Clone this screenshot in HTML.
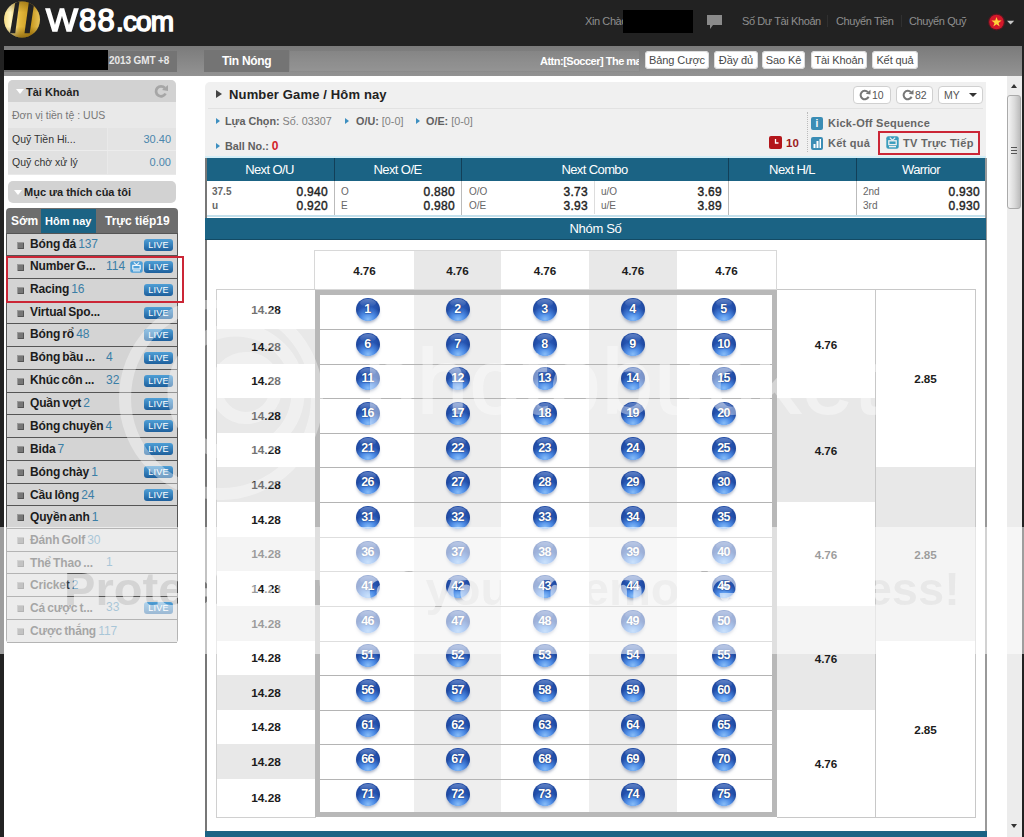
<!DOCTYPE html>
<html><head><meta charset="utf-8"><title>W88.com</title>
<style>
html,body{margin:0;padding:0}
body{width:1024px;height:837px;overflow:hidden;position:relative;background:#222;font-family:"Liberation Sans",sans-serif;font-size:12px;color:#222}
.a{position:absolute}
.t{position:absolute;white-space:nowrap;line-height:1}
#hdr{left:0;top:0;width:1024px;height:46px;background:#222}
#bar{left:4px;top:46px;width:1018px;height:30px;background:linear-gradient(#7b7b7b,#939393)}
#pg{left:4px;top:76px;width:1018px;height:761px;background:#fff}
.nav{color:#8f8f8f;font-size:11px;top:16px;letter-spacing:-0.4px}
.btn{position:absolute;top:51px;height:18px;background:#fff;border-radius:4px;font-size:11px;line-height:18px;text-align:center;color:#484848;box-shadow:0 0 0 1px #ddd inset;letter-spacing:-0.1px}
.lh{position:absolute;left:8px;width:168px;height:22px;background:#d2d2d2;border-radius:5px 5px 0 0;font-weight:bold;font-size:11px;color:#222}
.sp{position:absolute;left:7px;width:170px;height:22px;background:#d4d4d4;border-bottom:1px solid #555;box-sizing:border-box}
.sp b{position:absolute;left:23px;top:3px;font-size:12px;line-height:14px;color:#1c1c1c;white-space:nowrap;letter-spacing:-0.15px;word-spacing:-1px}
.sp b i{font-style:normal;font-weight:normal;color:#3a7ea6}
.sp .n{position:absolute;top:3px;font-size:12px;line-height:14px;color:#3a7ea6}
.sp .ic{position:absolute;left:10px;top:8px;width:7px;height:7px;background:#777;box-shadow:inset 1px 1px 0 #999,inset -1px -1px 0 #555}
.live{position:absolute;left:137px;top:5px;width:29px;height:12px;border-radius:3px;background:linear-gradient(#4f9fd6,#1d5f9c);color:#fff;font-size:9px;line-height:12px;text-align:center;letter-spacing:.2px}
.th{position:absolute;top:158px;height:23px;background:#1b6384;color:#fff;font-size:13px;line-height:23px;text-align:center;letter-spacing:-0.6px}
.od{font-size:12px;color:#222;-webkit-text-stroke:.4px #222;letter-spacing:.3px}
.lb{font-size:10px;color:#666}
.c{position:absolute;display:flex;align-items:center;justify-content:center;font-size:11.7px;font-weight:bold;color:#1c1c1c}
.g{background:#e8e8e8}
.l{font-size:11.8px}
.ball{position:absolute;width:24px;height:23px;border-radius:50%;background:radial-gradient(ellipse 62% 55% at 50% 92%,#86bcf8 0%,#4d8ce6 45%,rgba(60,120,220,0) 100%),radial-gradient(circle at 50% 45%,#2f62c0 0%,#2350ac 50%,#15357f 100%);color:#fff;font-size:12.5px;font-weight:bold;text-align:center;line-height:22px;letter-spacing:-0.7px;text-indent:-1px;box-shadow:0 3px 3px -1px rgba(90,110,150,.5);text-shadow:0 0 1px #123070,0 0 2px #123070}
.ball s{position:absolute;left:4px;top:1px;width:16px;height:8px;border-radius:50%;background:linear-gradient(rgba(255,255,255,.28),rgba(255,255,255,0))}
</style></head><body>

<div id="hdr" class="a"></div>
<svg class="a" style="left:3px;top:1px" width="38" height="38" viewBox="0 0 38 38">
<defs><linearGradient id="gd" x1="0" y1="0" x2="1" y2="0"><stop offset="0" stop-color="#f6dc84"/><stop offset=".18" stop-color="#fff6c4"/><stop offset=".45" stop-color="#e3b83c"/><stop offset=".75" stop-color="#c8981e"/><stop offset="1" stop-color="#e8c45a"/></linearGradient>
<linearGradient id="gv" x1="0" y1="0" x2="0" y2="1"><stop offset="0" stop-color="#6b4a00" stop-opacity=".45"/><stop offset=".3" stop-color="#6b4a00" stop-opacity="0"/><stop offset=".7" stop-color="#6b4a00" stop-opacity="0"/><stop offset="1" stop-color="#6b4a00" stop-opacity=".6"/></linearGradient>
<clipPath id="lc"><circle cx="19" cy="18.5" r="18"/></clipPath></defs>
<circle cx="19" cy="18.5" r="18" fill="url(#gd)"/><circle cx="19" cy="18.5" r="18" fill="url(#gv)"/>
<g clip-path="url(#lc)" fill="#222"><path d="M12.5 0 L16.5 0 L12.2 32.3 L7 32.3 Z"/><path d="M26 0 L31.5 0 L26.7 32.3 L21.5 32.3 Z"/></g>
</svg>
<div class="t" style="left:46px;top:5px;font-size:31px;color:#fff;-webkit-text-stroke:1.5px #fff;transform-origin:0 0;transform:scaleX(1.09)">W</div>
<div class="t" style="left:79px;top:5px;font-size:31px;color:#fff;-webkit-text-stroke:1.5px #fff;letter-spacing:1.2px">88</div>
<div class="t" style="left:116px;top:7.5px;font-size:28px;color:#fff;-webkit-text-stroke:1.5px #fff;letter-spacing:-0.9px">.com</div>
<div class="t nav" style="left:585px">Xin Chào</div>
<div class="a" style="left:623px;top:10px;width:70px;height:23px;background:#000"></div>
<svg class="a" style="left:706px;top:14px" width="17" height="16" viewBox="0 0 17 16"><path d="M1 1h15v10H7l-3 4v-4H1z" fill="#8a8a8a"/></svg>
<div class="t nav" style="left:742px">Số Dư Tài Khoản</div>
<div class="t nav" style="left:836px">Chuyển Tiền</div>
<div class="t nav" style="left:909px">Chuyển Quỹ</div>
<div class="a" style="left:827px;top:15px;width:1px;height:12px;background:#303030"></div>
<div class="a" style="left:901px;top:15px;width:1px;height:12px;background:#303030"></div>
<svg class="a" style="left:987px;top:13px" width="30" height="18" viewBox="0 0 30 18"><circle cx="9.5" cy="9" r="8.5" fill="#7a1020" opacity=".6"/><circle cx="9.5" cy="9" r="7.3" fill="#d4182a"/><path d="M9.5 4l1.3 3.6h3.8l-3.1 2.3 1.2 3.7-3.2-2.3-3.2 2.3 1.2-3.7-3.1-2.3h3.8z" fill="#ffd23a"/><path d="M20 7.7h7.2l-3.6 3.8z" fill="#c8c8c8"/></svg>
<div id="bar" class="a"></div>
<div class="a" style="left:4px;top:51px;width:173px;height:21px;background:#747474"></div>
<div class="a" style="left:4px;top:50px;width:104px;height:20px;background:#000"></div>
<div class="t" style="left:109px;top:56px;font-size:10px;color:#e8e8e8;font-weight:bold;letter-spacing:-0.1px">2013 GMT +8</div>
<div class="a" style="left:204px;top:50px;width:85px;height:22px;background:#747474"></div>
<div class="a" style="left:289px;top:50px;width:351px;height:22px;background:rgba(255,255,255,.05);border:1px solid rgba(0,0,0,.05);box-sizing:border-box"></div>
<div class="t" style="left:222px;top:55px;font-size:12px;color:#fff;font-weight:bold;letter-spacing:-0.3px">Tin Nóng</div>
<div class="t" style="left:540px;top:56px;font-size:11px;color:#fff;font-weight:bold;letter-spacing:-0.5px;width:99px;overflow:hidden">Attn:[Soccer] The maximum</div>
<div class="btn" style="left:645px;width:64px">Bảng Cược</div>
<div class="btn" style="left:714px;width:44px">Đầy đủ</div>
<div class="btn" style="left:762px;width:43px">Sao Kê</div>
<div class="btn" style="left:811px;width:56px">Tài Khoản</div>
<div class="btn" style="left:872px;width:46px">Kết quả</div>
<div id="pg" class="a"></div>
<div class="a" style="left:8px;top:80px;width:168px;height:95px;background:#e9e9e9;border-radius:5px 5px 0 0"></div>
<div class="lh" style="top:80px"></div>
<div class="a" style="left:16px;top:89px;border:4px solid transparent;border-top:5px solid #fff;width:0;height:0"></div>
<div class="t" style="left:26px;top:87px;font-size:11px;font-weight:bold;color:#222">Tài Khoản</div>
<svg class="a" style="left:154px;top:84px" width="15" height="15" viewBox="0 0 15 15"><path d="M11.5 9.5A5 5 0 1 1 10.8 4" fill="none" stroke="#a6a6a6" stroke-width="2.8"/><path d="M8 6L14 1V7z" fill="#a6a6a6"/></svg>
<div class="t" style="left:12px;top:110px;font-size:10.5px;color:#777">Đơn vị tiền tệ : UUS</div>
<div class="a" style="left:8px;top:128px;width:99px;height:46px;background:#e1e1e1"></div>
<div class="a" style="left:108px;top:128px;width:68px;height:46px;background:#e4e4e4"></div>
<div class="a" style="left:8px;top:150px;width:168px;height:1px;background:#ececec"></div>
<div class="t" style="left:12px;top:134px;font-size:10.5px;color:#333">Quỹ Tiền Hi...</div>
<div class="t" style="left:12px;top:157px;font-size:10.5px;color:#333">Quỹ chờ xử lý</div>
<div class="t" style="right:853px;top:134px;font-size:11px;color:#4a86ad">30.40</div>
<div class="t" style="right:853px;top:157px;font-size:11px;color:#4a86ad">0.00</div>
<div class="lh" style="top:181px;border-radius:5px"></div>
<div class="a" style="left:14px;top:190px;border:4px solid transparent;border-top:5px solid #fff;width:0;height:0"></div>
<div class="t" style="left:24px;top:187px;font-size:11px;font-weight:bold;color:#222">Mục ưa thích của tôi</div>
<div class="a" style="left:6px;top:208px;width:172px;height:26px;background:#6d6d6d;border-radius:4px 4px 0 0"></div>
<div class="a" style="left:41px;top:209px;width:55px;height:25px;background:#1b6384"></div>
<div class="t" style="left:11px;top:215px;font-size:12px;color:#fff;font-weight:bold;letter-spacing:0">Sớm</div>
<div class="t" style="left:45px;top:216px;font-size:11px;color:#fff;font-weight:bold;letter-spacing:0">Hôm nay</div>
<div class="t" style="left:105px;top:215px;font-size:12px;color:#fff;font-weight:bold;letter-spacing:0">Trực tiếp19</div>
<div class="a" style="left:6px;top:233px;width:172px;height:410px;background:#555;border-radius:0 0 4px 4px"></div>
<div class="sp" style="top:234px;height:22px"><span class="ic"></span><b>Bóng đá <i>137</i></b><span class="live">LIVE</span></div>
<div class="sp" style="top:256px;height:23px"><span class="ic"></span><b>Number G...</b><span class="n" style="left:99px">114</span><span class="live">LIVE</span></div>
<div class="sp" style="top:279px;height:23px"><span class="ic"></span><b>Racing <i>16</i></b><span class="live">LIVE</span></div>
<div class="sp" style="top:302px;height:22px"><span class="ic"></span><b>Virtual Spo...</b><span class="live">LIVE</span></div>
<div class="sp" style="top:324px;height:23px"><span class="ic"></span><b>Bóng rổ <i>48</i></b><span class="live">LIVE</span></div>
<div class="sp" style="top:347px;height:23px"><span class="ic"></span><b>Bóng bầu ...</b><span class="n" style="left:99px">4</span><span class="live">LIVE</span></div>
<div class="sp" style="top:370px;height:23px"><span class="ic"></span><b>Khúc côn ...</b><span class="n" style="left:99px">32</span><span class="live">LIVE</span></div>
<div class="sp" style="top:393px;height:22px"><span class="ic"></span><b>Quần vợt <i>2</i></b><span class="live">LIVE</span></div>
<div class="sp" style="top:415px;height:23px"><span class="ic"></span><b style="top:4px">Bóng chuyền <i>4</i></b><span class="live">LIVE</span></div>
<div class="sp" style="top:438px;height:23px"><span class="ic"></span><b style="top:4px">Bida <i>7</i></b><span class="live">LIVE</span></div>
<div class="sp" style="top:461px;height:23px"><span class="ic"></span><b style="top:4px">Bóng chày <i>1</i></b><span class="live">LIVE</span></div>
<div class="sp" style="top:484px;height:22px"><span class="ic"></span><b style="top:4px">Cầu lông <i>24</i></b><span class="live">LIVE</span></div>
<div class="sp" style="top:506px;height:23px"><span class="ic"></span><b style="top:4px">Quyền anh <i>1</i></b></div>
<div class="sp" style="top:529px;height:23px"><span class="ic"></span><b style="color:#333;top:4px">Đánh Golf <i>30</i></b></div>
<div class="sp" style="top:552px;height:22px"><span class="ic"></span><b style="color:#333;top:4px">Thể Thao ...</b><span class="n" style="left:99px">1</span></div>
<div class="sp" style="top:574px;height:23px"><span class="ic"></span><b style="color:#333;top:4px">Cricket <i>2</i></b></div>
<div class="sp" style="top:597px;height:23px"><span class="ic"></span><b style="color:#333;top:4px">Cá cược t...</b><span class="n" style="left:99px">33</span><span class="live">LIVE</span></div>
<div class="sp" style="top:620px;height:23px"><span class="ic"></span><b style="color:#333;top:4px">Cược thắng <i>117</i></b></div>
<svg class="a" style="left:130px;top:261px" width="13" height="12" viewBox="0 0 13 12"><rect x=".3" y=".3" width="12.4" height="11.4" rx="2" fill="#4d9fd8"/><path d="M3.8 1.4L6.5 3.8L9.2 1.4" stroke="#eef5fb" fill="none" stroke-width="1.1"/><rect x="2.8" y="4.4" width="7.4" height="3.6" fill="none" stroke="#eef5fb" stroke-width="1.2"/><rect x="3" y="9.3" width="7" height="1.1" fill="#eef5fb"/></svg>
<div class="a" style="left:6px;top:256px;width:178px;height:47px;border:2.5px solid #cb2636;box-sizing:border-box"></div>
<div class="a" style="left:205px;top:82px;width:781px;height:76px;background:#f0f0f0;border-radius:5px 0 0 0"></div>
<div class="a" style="left:208px;top:108px;width:775px;height:1px;background:#e2e2e2"></div>
<div class="a" style="left:216px;top:90px;border:4px solid transparent;border-left:6px solid #444;width:0;height:0"></div>
<div class="t" style="left:229px;top:88px;font-size:13px;font-weight:bold;color:#222;letter-spacing:0.15px">Number Game / Hôm nay</div>
<div class="a" style="left:216px;top:118px;border:3px solid transparent;border-left:4px solid #3d8fc0;width:0;height:0"></div>
<div class="a" style="left:345px;top:118px;border:3px solid transparent;border-left:4px solid #3d8fc0;width:0;height:0"></div>
<div class="a" style="left:416px;top:118px;border:3px solid transparent;border-left:4px solid #3d8fc0;width:0;height:0"></div>
<div class="a" style="left:216px;top:143px;border:3px solid transparent;border-left:4px solid #3d8fc0;width:0;height:0"></div>
<div class="t" style="left:225px;top:116px;font-size:10.8px;color:#808080"><b style="color:#606060">Lựa Chọn:</b> Số. 03307</div>
<div class="t" style="left:356px;top:116px;font-size:10.8px;color:#808080"><b style="color:#606060">O/U:</b> [0-0]</div>
<div class="t" style="left:426px;top:116px;font-size:10.8px;color:#808080"><b style="color:#606060">O/E:</b> [0-0]</div>
<div class="t" style="left:225px;top:140px;font-size:10.8px;color:#606060;font-weight:bold">Ball No.: <span style="color:#d2232a;font-size:12px">0</span></div>
<div class="a" style="left:853px;top:86px;width:38px;height:18px;background:#fff;border:1px solid #d0d0d0;border-radius:4px;box-sizing:border-box"></div>
<div class="a" style="left:896px;top:86px;width:37px;height:18px;background:#fff;border:1px solid #d0d0d0;border-radius:4px;box-sizing:border-box"></div>
<div class="a" style="left:938px;top:86px;width:45px;height:18px;background:#fff;border:1px solid #d0d0d0;border-radius:4px;box-sizing:border-box"></div>
<svg class="a" style="left:859px;top:89px" width="12" height="12" viewBox="0 0 10 10"><path d="M8 6.5A3.5 3.5 0 1 1 7.4 2.6" fill="none" stroke="#777" stroke-width="1.7"/><path d="M5.6 4L9.6 .6V4.6z" fill="#777"/></svg>
<svg class="a" style="left:902px;top:89px" width="12" height="12" viewBox="0 0 10 10"><path d="M8 6.5A3.5 3.5 0 1 1 7.4 2.6" fill="none" stroke="#777" stroke-width="1.7"/><path d="M5.6 4L9.6 .6V4.6z" fill="#777"/></svg>
<div class="t" style="left:872px;top:90px;font-size:10.5px;color:#555">10</div>
<div class="t" style="left:915px;top:90px;font-size:10.5px;color:#555">82</div>
<div class="t" style="left:944px;top:90px;font-size:10.5px;color:#555">MY</div>
<div class="a" style="left:969px;top:93px;border:4px solid transparent;border-top:4px solid #333;width:0;height:0"></div>
<div class="a" style="left:807px;top:112px;width:0;height:40px;border-left:1px dotted #bbb"></div>
<div class="a" style="left:811px;top:117px;width:12px;height:13px;background:#3b8db5;border-radius:2px;color:#fff;font-size:10px;font-weight:bold;text-align:center;line-height:13px">i</div>
<div class="t" style="left:828px;top:118px;font-size:11px;font-weight:bold;color:#666;letter-spacing:0.25px">Kick-Off Sequence</div>
<svg class="a" style="left:811px;top:137px" width="12" height="13" viewBox="0 0 12 13"><rect width="12" height="13" rx="2" fill="#3b8db5"/><rect x="2.5" y="7" width="2" height="4" fill="#fff"/><rect x="5.5" y="4" width="2" height="7" fill="#fff"/><rect x="8.5" y="2" width="1.5" height="9" fill="#fff"/></svg>
<div class="t" style="left:828px;top:138px;font-size:11px;font-weight:bold;color:#666;letter-spacing:0.25px">Kết quả</div>
<svg class="a" style="left:769px;top:136px" width="13" height="13" viewBox="0 0 13 13"><rect width="13" height="13" rx="2" fill="#b3161b"/><path d="M6.5 3v4h3" stroke="#fff" fill="none" stroke-width="1.3"/></svg>
<div class="t" style="left:786px;top:138px;font-size:11.5px;font-weight:bold;color:#9c1a1c">10</div>
<div class="a" style="left:878px;top:131px;width:102px;height:24px;border:2.5px solid #cb2636;box-sizing:border-box"></div>
<svg class="a" style="left:886px;top:136px" width="13" height="13" viewBox="0 0 13 13"><rect x=".3" y=".3" width="12.4" height="12.4" rx="2" fill="#3a9dbd"/><path d="M3.8 1.6L6.5 4.2L9.2 1.6" stroke="#f0f0f0" fill="none" stroke-width="1.2"/><rect x="2.8" y="4.8" width="7.4" height="3.8" fill="none" stroke="#f0f0f0" stroke-width="1.3"/><rect x="3" y="10" width="7" height="1.3" fill="#f0f0f0"/></svg>
<div class="t" style="left:903px;top:138px;font-size:11px;font-weight:bold;color:#666;letter-spacing:0.3px">TV Trực Tiếp</div>
<div class="a" style="left:205px;top:156px;width:781px;height:2px;background:#d4eef7"></div>
<div class="a" style="left:205px;top:158px;width:781px;height:23px;background:#1b6384"></div>
<div class="th" style="left:205px;width:129px">Next O/U</div>
<div class="th" style="left:334px;width:127px">Next O/E</div>
<div class="th" style="left:461px;width:267px">Next Combo</div>
<div class="th" style="left:728px;width:128px">Next H/L</div>
<div class="th" style="left:856px;width:130px">Warrior</div>
<div class="a" style="left:334px;top:158px;width:1px;height:23px;background:#123f58"></div>
<div class="a" style="left:334px;top:181px;width:1px;height:35px;background:#bbb"></div>
<div class="a" style="left:461px;top:158px;width:1px;height:23px;background:#123f58"></div>
<div class="a" style="left:461px;top:181px;width:1px;height:35px;background:#bbb"></div>
<div class="a" style="left:728px;top:158px;width:1px;height:23px;background:#123f58"></div>
<div class="a" style="left:728px;top:181px;width:1px;height:35px;background:#bbb"></div>
<div class="a" style="left:856px;top:158px;width:1px;height:23px;background:#123f58"></div>
<div class="a" style="left:856px;top:181px;width:1px;height:35px;background:#bbb"></div>
<div class="a" style="left:205px;top:158px;width:2px;height:674px;background:#777"></div>
<div class="a" style="left:985px;top:158px;width:2px;height:674px;background:#999"></div>
<div class="a" style="left:207px;top:215px;width:778px;height:2px;background:#c4e0ec"></div>
<div class="t lb" style="left:212px;top:187px"><b>37.5</b></div>
<div class="t od" style="right:696px;top:186px">0.940</div>
<div class="t lb" style="left:212px;top:201px"><b>u</b></div>
<div class="t od" style="right:696px;top:200px">0.920</div>
<div class="t lb" style="left:341px;top:187px">O</div>
<div class="t od" style="right:569px;top:186px">0.880</div>
<div class="t lb" style="left:341px;top:201px">E</div>
<div class="t od" style="right:569px;top:200px">0.980</div>
<div class="t lb" style="left:469px;top:187px">O/O</div>
<div class="t od" style="right:436px;top:186px">3.73</div>
<div class="t lb" style="left:469px;top:201px">O/E</div>
<div class="t od" style="right:436px;top:200px">3.93</div>
<div class="t lb" style="left:601px;top:187px">u/O</div>
<div class="t od" style="right:302px;top:186px">3.69</div>
<div class="t lb" style="left:601px;top:201px">u/E</div>
<div class="t od" style="right:302px;top:200px">3.89</div>
<div class="t lb" style="left:863px;top:187px">2nd</div>
<div class="t od" style="right:44px;top:186px">0.930</div>
<div class="t lb" style="left:863px;top:201px">3rd</div>
<div class="t od" style="right:44px;top:200px">0.930</div>
<div class="a" style="left:594px;top:181px;width:1px;height:33px;background:#ddd"></div>
<div class="a" style="left:205px;top:218px;width:781px;height:22px;background:#1b6384;border-bottom:1px solid #134a64;box-sizing:border-box"></div>
<div class="t" style="left:205px;width:781px;text-align:center;top:222px;font-size:13px;color:#fff;letter-spacing:-0.3px">Nhóm Số</div>
<div class="a" style="left:314px;top:250px;width:463px;height:40px;background:#fff;border:1px solid #d8d8d8;box-sizing:border-box"></div>
<div class="c" style="left:315px;top:251px;width:99px;height:38px">4.76</div>
<div class="c g" style="left:414px;top:251px;width:87px;height:38px">4.76</div>
<div class="c" style="left:501px;top:251px;width:88px;height:38px">4.76</div>
<div class="c g" style="left:589px;top:251px;width:88px;height:38px">4.76</div>
<div class="c" style="left:677px;top:251px;width:99px;height:38px">4.76</div>
<div class="a" style="left:216px;top:289px;width:100px;height:529px;background:#fff;border:1px solid #d0d0d0;box-sizing:border-box"></div>
<div class="c l" style="left:217px;top:290px;width:98px;height:39px">14.28</div>
<div class="c g l" style="left:217px;top:329px;width:98px;height:35px">14.28</div>
<div class="c l" style="left:217px;top:364px;width:98px;height:34px">14.28</div>
<div class="c g l" style="left:217px;top:398px;width:98px;height:35px">14.28</div>
<div class="c l" style="left:217px;top:433px;width:98px;height:34px">14.28</div>
<div class="c g l" style="left:217px;top:467px;width:98px;height:35px">14.28</div>
<div class="c l" style="left:217px;top:502px;width:98px;height:35px">14.28</div>
<div class="c g l" style="left:217px;top:537px;width:98px;height:34px">14.28</div>
<div class="c l" style="left:217px;top:571px;width:98px;height:35px">14.28</div>
<div class="c g l" style="left:217px;top:606px;width:98px;height:35px">14.28</div>
<div class="c l" style="left:217px;top:641px;width:98px;height:34px">14.28</div>
<div class="c g l" style="left:217px;top:675px;width:98px;height:35px">14.28</div>
<div class="c l" style="left:217px;top:710px;width:98px;height:34px">14.28</div>
<div class="c g l" style="left:217px;top:744px;width:98px;height:35px">14.28</div>
<div class="c l" style="left:217px;top:779px;width:98px;height:38px">14.28</div>
<div class="a" style="left:315px;top:290px;width:462px;height:527px;background:#b8b8b8"></div>
<div class="a" style="left:320px;top:295px;width:94px;height:517px;background:#fff"></div>
<div class="a" style="left:414px;top:295px;width:87px;height:517px;background:#eeeeee"></div>
<div class="a" style="left:501px;top:295px;width:88px;height:517px;background:#fff"></div>
<div class="a" style="left:589px;top:295px;width:88px;height:517px;background:#eeeeee"></div>
<div class="a" style="left:677px;top:295px;width:95px;height:517px;background:#fff"></div>
<div class="a" style="left:320px;top:329px;width:452px;height:1px;background:#b4b4b4"></div>
<div class="a" style="left:320px;top:364px;width:452px;height:1px;background:#b4b4b4"></div>
<div class="a" style="left:320px;top:398px;width:452px;height:1px;background:#b4b4b4"></div>
<div class="a" style="left:320px;top:433px;width:452px;height:1px;background:#b4b4b4"></div>
<div class="a" style="left:320px;top:467px;width:452px;height:1px;background:#b4b4b4"></div>
<div class="a" style="left:320px;top:502px;width:452px;height:1px;background:#b4b4b4"></div>
<div class="a" style="left:320px;top:537px;width:452px;height:1px;background:#b4b4b4"></div>
<div class="a" style="left:320px;top:571px;width:452px;height:1px;background:#b4b4b4"></div>
<div class="a" style="left:320px;top:606px;width:452px;height:1px;background:#b4b4b4"></div>
<div class="a" style="left:320px;top:641px;width:452px;height:1px;background:#b4b4b4"></div>
<div class="a" style="left:320px;top:675px;width:452px;height:1px;background:#b4b4b4"></div>
<div class="a" style="left:320px;top:710px;width:452px;height:1px;background:#b4b4b4"></div>
<div class="a" style="left:320px;top:744px;width:452px;height:1px;background:#b4b4b4"></div>
<div class="a" style="left:320px;top:779px;width:452px;height:1px;background:#b4b4b4"></div>
<div class="ball" style="left:356px;top:298px"><s></s>1</div>
<div class="ball" style="left:446px;top:298px"><s></s>2</div>
<div class="ball" style="left:533px;top:298px"><s></s>3</div>
<div class="ball" style="left:621px;top:298px"><s></s>4</div>
<div class="ball" style="left:712px;top:298px"><s></s>5</div>
<div class="ball" style="left:356px;top:333px"><s></s>6</div>
<div class="ball" style="left:446px;top:333px"><s></s>7</div>
<div class="ball" style="left:533px;top:333px"><s></s>8</div>
<div class="ball" style="left:621px;top:333px"><s></s>9</div>
<div class="ball" style="left:712px;top:333px"><s></s>10</div>
<div class="ball" style="left:356px;top:367px"><s></s>11</div>
<div class="ball" style="left:446px;top:367px"><s></s>12</div>
<div class="ball" style="left:533px;top:367px"><s></s>13</div>
<div class="ball" style="left:621px;top:367px"><s></s>14</div>
<div class="ball" style="left:712px;top:367px"><s></s>15</div>
<div class="ball" style="left:356px;top:402px"><s></s>16</div>
<div class="ball" style="left:446px;top:402px"><s></s>17</div>
<div class="ball" style="left:533px;top:402px"><s></s>18</div>
<div class="ball" style="left:621px;top:402px"><s></s>19</div>
<div class="ball" style="left:712px;top:402px"><s></s>20</div>
<div class="ball" style="left:356px;top:437px"><s></s>21</div>
<div class="ball" style="left:446px;top:437px"><s></s>22</div>
<div class="ball" style="left:533px;top:437px"><s></s>23</div>
<div class="ball" style="left:621px;top:437px"><s></s>24</div>
<div class="ball" style="left:712px;top:437px"><s></s>25</div>
<div class="ball" style="left:356px;top:471px"><s></s>26</div>
<div class="ball" style="left:446px;top:471px"><s></s>27</div>
<div class="ball" style="left:533px;top:471px"><s></s>28</div>
<div class="ball" style="left:621px;top:471px"><s></s>29</div>
<div class="ball" style="left:712px;top:471px"><s></s>30</div>
<div class="ball" style="left:356px;top:506px"><s></s>31</div>
<div class="ball" style="left:446px;top:506px"><s></s>32</div>
<div class="ball" style="left:533px;top:506px"><s></s>33</div>
<div class="ball" style="left:621px;top:506px"><s></s>34</div>
<div class="ball" style="left:712px;top:506px"><s></s>35</div>
<div class="ball" style="left:356px;top:541px"><s></s>36</div>
<div class="ball" style="left:446px;top:541px"><s></s>37</div>
<div class="ball" style="left:533px;top:541px"><s></s>38</div>
<div class="ball" style="left:621px;top:541px"><s></s>39</div>
<div class="ball" style="left:712px;top:541px"><s></s>40</div>
<div class="ball" style="left:356px;top:575px"><s></s>41</div>
<div class="ball" style="left:446px;top:575px"><s></s>42</div>
<div class="ball" style="left:533px;top:575px"><s></s>43</div>
<div class="ball" style="left:621px;top:575px"><s></s>44</div>
<div class="ball" style="left:712px;top:575px"><s></s>45</div>
<div class="ball" style="left:356px;top:610px"><s></s>46</div>
<div class="ball" style="left:446px;top:610px"><s></s>47</div>
<div class="ball" style="left:533px;top:610px"><s></s>48</div>
<div class="ball" style="left:621px;top:610px"><s></s>49</div>
<div class="ball" style="left:712px;top:610px"><s></s>50</div>
<div class="ball" style="left:356px;top:644px"><s></s>51</div>
<div class="ball" style="left:446px;top:644px"><s></s>52</div>
<div class="ball" style="left:533px;top:644px"><s></s>53</div>
<div class="ball" style="left:621px;top:644px"><s></s>54</div>
<div class="ball" style="left:712px;top:644px"><s></s>55</div>
<div class="ball" style="left:356px;top:679px"><s></s>56</div>
<div class="ball" style="left:446px;top:679px"><s></s>57</div>
<div class="ball" style="left:533px;top:679px"><s></s>58</div>
<div class="ball" style="left:621px;top:679px"><s></s>59</div>
<div class="ball" style="left:712px;top:679px"><s></s>60</div>
<div class="ball" style="left:356px;top:714px"><s></s>61</div>
<div class="ball" style="left:446px;top:714px"><s></s>62</div>
<div class="ball" style="left:533px;top:714px"><s></s>63</div>
<div class="ball" style="left:621px;top:714px"><s></s>64</div>
<div class="ball" style="left:712px;top:714px"><s></s>65</div>
<div class="ball" style="left:356px;top:748px"><s></s>66</div>
<div class="ball" style="left:446px;top:748px"><s></s>67</div>
<div class="ball" style="left:533px;top:748px"><s></s>68</div>
<div class="ball" style="left:621px;top:748px"><s></s>69</div>
<div class="ball" style="left:712px;top:748px"><s></s>70</div>
<div class="ball" style="left:356px;top:783px"><s></s>71</div>
<div class="ball" style="left:446px;top:783px"><s></s>72</div>
<div class="ball" style="left:533px;top:783px"><s></s>73</div>
<div class="ball" style="left:621px;top:783px"><s></s>74</div>
<div class="ball" style="left:712px;top:783px"><s></s>75</div>
<div class="a" style="left:777px;top:289px;width:199px;height:529px;background:#fff;border:1px solid #c8c8c8;border-left:0;box-sizing:border-box"></div>
<div class="c" style="left:777px;top:290px;width:98px;height:108px">4.76</div>
<div class="c g" style="left:777px;top:398px;width:98px;height:104px">4.76</div>
<div class="c" style="left:777px;top:502px;width:98px;height:104px">4.76</div>
<div class="c g" style="left:777px;top:606px;width:98px;height:104px">4.76</div>
<div class="c" style="left:777px;top:710px;width:98px;height:107px">4.76</div>
<div class="c" style="left:876px;top:290px;width:99px;height:177px">2.85</div>
<div class="c g" style="left:876px;top:467px;width:99px;height:174px">2.85</div>
<div class="c" style="left:876px;top:641px;width:99px;height:176px">2.85</div>
<div class="a" style="left:875px;top:290px;width:1px;height:527px;background:#c8c8c8"></div>

<div class="a" style="left:205px;top:831px;width:782px;height:6px;background:#1b6384"></div>
<div class="a" style="left:1007px;top:76px;width:15px;height:761px;background:#ececec"></div>
<div class="a" style="left:1007px;top:95px;width:14px;height:114px;border-radius:3px;border:1px solid #aaa;box-sizing:border-box;background:linear-gradient(90deg,#f4f4f4,#dadada 55%,#bcbcbc)"></div>
<div class="a" style="left:1011px;top:81px;border:3.5px solid transparent;border-bottom:4.5px solid #333;width:0;height:0"></div>
<div class="a" style="left:1011px;top:824px;border:3.5px solid transparent;border-top:4.5px solid #333;width:0;height:0"></div>
<div class="a" style="left:1011px;top:147px;width:6px;height:1px;background:#555"></div>
<div class="a" style="left:1011px;top:150px;width:6px;height:1px;background:#555"></div>
<div class="a" style="left:1011px;top:153px;width:6px;height:1px;background:#555"></div>
<svg class="a" style="left:0;top:300px" width="1024" height="360" viewBox="0 300 1024 360">
<defs><mask id="wm" maskUnits="userSpaceOnUse" x="0" y="520" width="1024" height="140"><rect x="0" y="520" width="1024" height="140" fill="#fff"/>
<text x="64" y="604.5" font-family="Liberation Sans, sans-serif" font-weight="bold" font-size="46" textLength="896" lengthAdjust="spacingAndGlyphs" fill="#000">Protect more of your memories for less!</text></mask></defs>
<g fill="none" stroke="#fff" opacity=".38"><circle cx="221" cy="398" r="96" stroke-width="12"/><circle cx="236" cy="392" r="62" stroke-width="13"/><circle cx="246" cy="388" r="30" stroke-width="12"/></g>
<text x="365" y="413" font-family="Liberation Sans, sans-serif" font-size="90" textLength="515" lengthAdjust="spacing" fill="#fff" stroke="#fff" stroke-width="2" opacity=".4">photobucket</text>
<rect x="0" y="527" width="1024" height="127" fill="#fff" opacity=".56" mask="url(#wm)"/>
</svg>
</body></html>
